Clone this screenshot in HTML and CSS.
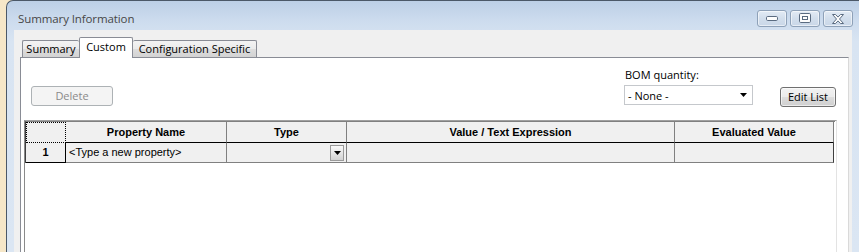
FILE: index.html
```html
<!DOCTYPE html>
<html>
<head>
<meta charset="utf-8">
<link rel="stylesheet" href="styles.css">
</head>
<body>
<div class="window">
  <div class="titlebar">
    <span class="title">Summary Information</span>
    <div class="caps">
      <div class="cap">
        <svg width="12" height="6" viewBox="0 0 12 6"><rect x="0.5" y="0.5" width="11" height="4" rx="1.2" fill="#fdfdfd" stroke="#5a6b80"/></svg>
      </div>
      <div class="cap">
        <svg width="12" height="11" viewBox="0 0 12 11"><rect x="0.5" y="0.5" width="11" height="9" rx="1.2" fill="#fdfdfd" stroke="#5a6b80"/><rect x="3.5" y="3.5" width="5" height="3" fill="none" stroke="#5a6b80"/></svg>
      </div>
      <div class="cap">
        <svg width="12" height="10" viewBox="0 0 12 10"><path d="M0.5 0.5h3l2.5 2.6 2.5-2.6h3l-4 4.5 4 4.5h-3l-2.5-2.6-2.5 2.6h-3l4-4.5z" fill="#fdfdfd" stroke="#5a6b80" stroke-linejoin="round"/></svg>
      </div>
    </div>
  </div>
  <div class="frame">
    <div class="face">
      <div class="tabs">
        <div class="tab tab-summary">Summary</div>
        <div class="tab tab-active">Custom</div>
        <div class="tab tab-config">Configuration Specific</div>
      </div>
      <div class="panel">
        <div class="controls">
          <div class="btn btn-disabled btn-delete">Delete</div>
          <div class="bom">
            <div class="bom-label">BOM quantity:</div>
            <div class="combo">
              <span>- None -</span>
              <svg width="7" height="4" viewBox="0 0 7 4"><path d="M0 0h7L3.5 4z" fill="#000"/></svg>
            </div>
          </div>
          <div class="btn btn-edit">Edit List</div>
        </div>
        <div class="gridbox">
          <div class="grid">
            <div class="hc hc-corner"></div>
            <div class="hc">Property Name</div>
            <div class="hc">Type</div>
            <div class="hc">Value / Text Expression</div>
            <div class="hc">Evaluated Value</div>
            <div class="dc dc-num">1</div>
            <div class="dc dc-text">&lt;Type a new property&gt;</div>
            <div class="dc dc-type">
              <div class="ddbtn"><svg width="7" height="4" viewBox="0 0 7 4"><path d="M0 0h7L3.5 4z" fill="#000"/></svg></div>
            </div>
            <div class="dc"></div>
            <div class="dc"></div>
          </div>
        </div>
      </div>
    </div>
  </div>
</div>
</body>
</html>
```
FILE: styles.css
```css
html, body {
  margin: 0;
  padding: 0;
}
body {
  width: 859px;
  height: 252px;
  overflow: hidden;
  background: linear-gradient(90deg, #f6e7c8, #f2dfb6);
  font-family: "Open Sans", "Noto Sans", sans-serif;
}
.window {
  margin-left: 6px;
  width: 852px;
  height: 251px;
  border-left: 1px solid #4b5868;
  border-top: 1px solid #4b5868;
  border-top-left-radius: 7px;
  background: linear-gradient(180deg, #bccfe6 0px, #cddcee 20px, #d8e4f2 40px, #dbe6f3 100%);
  overflow: hidden;
  display: flex;
  flex-direction: column;
}
.titlebar {
  height: 29px;
  display: flex;
  align-items: flex-start;
  justify-content: space-between;
  flex-shrink: 0;
}
.title {
  margin-left: 11px;
  margin-top: 9px;
  font-size: 11.5px;
  line-height: 18px;
  color: #474747;
  letter-spacing: -0.1px;
}
.caps {
  display: flex;
  gap: 3px;
  margin-top: 9px;
  margin-right: 6px;
}
.cap {
  width: 30px;
  height: 17px;
  box-sizing: border-box;
  border: 1px solid #8ea1b8;
  border-radius: 3px;
  background: linear-gradient(180deg, #e3ebf5, #d2deec 50%, #c9d7e8);
  box-shadow: inset 0 0 0 1px rgba(255,255,255,0.55);
  display: flex;
  align-items: center;
  justify-content: center;
}
.frame {
  flex: 1;
  min-height: 0;
  padding: 0 7px 0 7px;
  display: flex;
}
.face {
  flex: 1;
  background: #f0f0f0;
  padding: 7px 3px 0 6px;
  display: flex;
  flex-direction: column;
}
.tabs {
  height: 20px;
  display: flex;
  align-items: flex-end;
  padding-left: 2px;
  flex-shrink: 0;
}
.tab {
  box-sizing: border-box;
  height: 17px;
  border: 1px solid #898c95;
  border-bottom: none;
  border-radius: 2px 2px 0 0;
  background: linear-gradient(180deg, #f3f3f3, #ebebeb 50%, #dddddd 51%, #d3d3d3);
  font-size: 11px;
  line-height: 16px;
  color: #000;
  text-align: center;
  white-space: nowrap;
}
.tab-summary {
  width: 57px;
  border-right: none;
}
.tab-active {
  width: 54px;
  height: 21px;
  margin-bottom: -1px;
  background: #fff;
  position: relative;
  z-index: 1;
  line-height: 18px;
}
.tab-config {
  width: 124px;
  border-left: none;
}
.panel {
  flex: 1;
  background: #fff;
  border: 1px solid #898c95;
  border-bottom: none;
  border-right-color: #d9d9d9;
  display: flex;
  flex-direction: column;
}
.controls {
  height: 62px;
  display: flex;
  align-items: flex-start;
  flex-shrink: 0;
}
.btn {
  box-sizing: border-box;
  border-radius: 3px;
  font-size: 11px;
  text-align: center;
}
.btn-delete {
  width: 82px;
  height: 20px;
  margin-left: 10px;
  margin-top: 28px;
  line-height: 18px;
}
.btn-disabled {
  border: 1px solid #adb2b5;
  background: #f4f4f4;
  color: #8a8a8a;
}
.bom {
  margin-left: auto;
  width: 129px;
  margin-top: 9px;
}
.bom-label {
  font-size: 11px;
  line-height: 16px;
  color: #000;
  padding-left: 1px;
}
.combo {
  margin-top: 2px;
  box-sizing: border-box;
  height: 20px;
  border: 1px solid #c5c8cc;
  background: #fff;
  display: flex;
  align-items: center;
  justify-content: space-between;
  padding: 0 5px 0 3px;
  font-size: 11px;
  color: #000;
}
.btn-edit {
  width: 56px;
  height: 20px;
  margin-left: 27px;
  margin-right: 12px;
  margin-top: 29px;
  border: 1px solid #707070;
  background: linear-gradient(180deg, #f2f2f2, #ebebeb 50%, #dddddd 51%, #cfcfcf);
  box-shadow: inset 0 0 0 1px rgba(255,255,255,0.6);
  line-height: 18px;
  color: #000;
}
.gridbox {
  flex: 1;
  margin: 0 11px 0 3px;
  border-top: 1px solid #a0a0a0;
  border-left: 1px solid #8a8a8a;
  border-right: 1px solid #e3e3e3;
  background: #fff;
}
.grid {
  display: grid;
  grid-template-columns: 40px 161px 120px 328px 159px;
  grid-template-rows: 21px 20px;
  width: 809px;
  border-top: 1px solid #808080;
  border-left: 1px solid #404040;
  font-family: "Liberation Sans", Arial, sans-serif;
  font-size: 11px;
  color: #000;
}
.hc, .dc {
  box-sizing: border-box;
  background: #f0f0f0;
  border-right: 1px solid #808080;
}
.hc {
  border-bottom: 1px solid #000;
  font-weight: bold;
  text-align: center;
  line-height: 20px;
}
.hc:last-child {
  border-right-color: #404040;
}
.hc-corner {
  border: 1px dotted #000;
}
.dc {
  border-bottom: 1px solid #808080;
  line-height: 19px;
}
.dc:last-child {
  border-right-color: #404040;
}
.dc-num {
  font-weight: bold;
  text-align: center;
  border-right-color: #000;
  border-bottom-color: #000;
}
.dc-text {
  padding-left: 3px;
}
.dc-type {
  display: flex;
  justify-content: flex-end;
  align-items: center;
  padding-right: 2px;
}
.ddbtn {
  width: 14px;
  height: 16px;
  box-sizing: border-box;
  border: 1px solid #9a9a9a;
  background: linear-gradient(180deg, #fafafa, #e4e4e4 55%, #d2d2d2);
  display: flex;
  align-items: center;
  justify-content: center;
}
```
